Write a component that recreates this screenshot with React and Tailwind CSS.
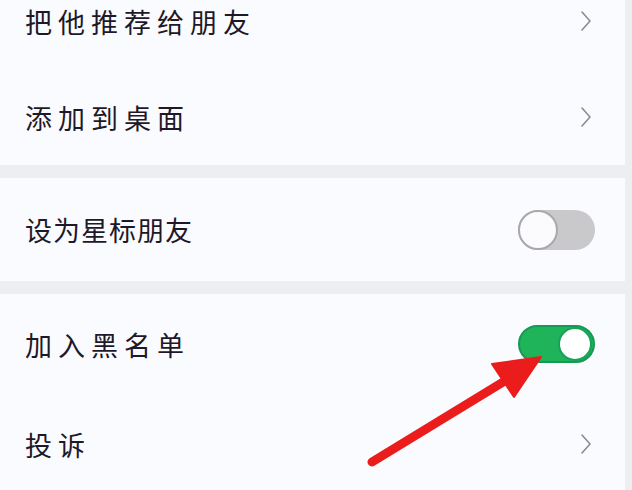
const Chevron = () => (
  <svg width="12" height="20" viewBox="0 0 12 20" className="shrink-0">
    <polyline points="2,1 10,10 2,19" fill="none" stroke="#8c8a94" strokeWidth="1.6" strokeLinecap="round" strokeLinejoin="round" />
  </svg>
);

const ToggleOff = () => (
  <div className="w-[77px] h-[40px] rounded-full bg-[#c9c9cc] relative shrink-0">
    <div className="w-[40px] h-[40px] rounded-full bg-[#fbfbfd] border-2 border-[#a9a9ad]" />
  </div>
);

const ToggleOn = () => (
  <div className="w-[77px] h-[38px] rounded-full bg-[#1fb45a] border-2 border-[#159a55] flex items-center justify-end pr-[1px] shrink-0">
    <div className="w-[34px] h-[34px] rounded-full bg-white border-2 border-[#17a257]" />
  </div>
);

const Row = ({ label, h, tracking = "tracking-[6px]", right }) => (
  <div className={`flex items-center justify-between pl-[25px] pr-[30px] ${h}`}>
    <span className={`text-[27px] leading-none text-[#1f1828] ${tracking}`}>{label}</span>
    {right}
  </div>
);

export default function App() {
  return (
    <div
      className="relative w-[632px] h-[490px] overflow-hidden bg-[#eceef2]"
      style={{ fontFamily: '"Noto Sans CJK SC", "Noto Sans", sans-serif' }}
    >
      <div className="mr-[7px] flex flex-col">
        <div className="bg-[#fafbfe] -mt-[27px]">
          <Row label="把他推荐给朋友" h="h-[96px]" right={<div className="mr-[3px]"><Chevron /></div>} />
          <Row label="添加到桌面" h="h-[96px]" right={<div className="mr-[3px]"><Chevron /></div>} />
        </div>
        <div className="h-[13px]" />
        <div className="bg-[#fafbfe]">
          <Row label="设为星标朋友" h="h-[103px]" tracking="tracking-[1px]" right={<ToggleOff />} />
        </div>
        <div className="h-[13px]" />
        <div className="bg-[#fafbfe]">
          <Row label="加入黑名单" h="h-[100px]" right={<ToggleOn />} />
          <Row label="投诉" h="h-[100px]" right={<div className="mr-[3px]"><Chevron /></div>} />
        </div>
      </div>

      <svg className="absolute inset-0 pointer-events-none" width="632" height="490" viewBox="0 0 632 490">
        <line x1="372" y1="462" x2="508" y2="379" stroke="#ea1d1c" strokeWidth="9" strokeLinecap="round" />
        <polygon points="541,357 492,364 514,397" fill="#ea1d1c" stroke="#ea1d1c" strokeWidth="2" strokeLinejoin="round" />
      </svg>
    </div>
  );
}
